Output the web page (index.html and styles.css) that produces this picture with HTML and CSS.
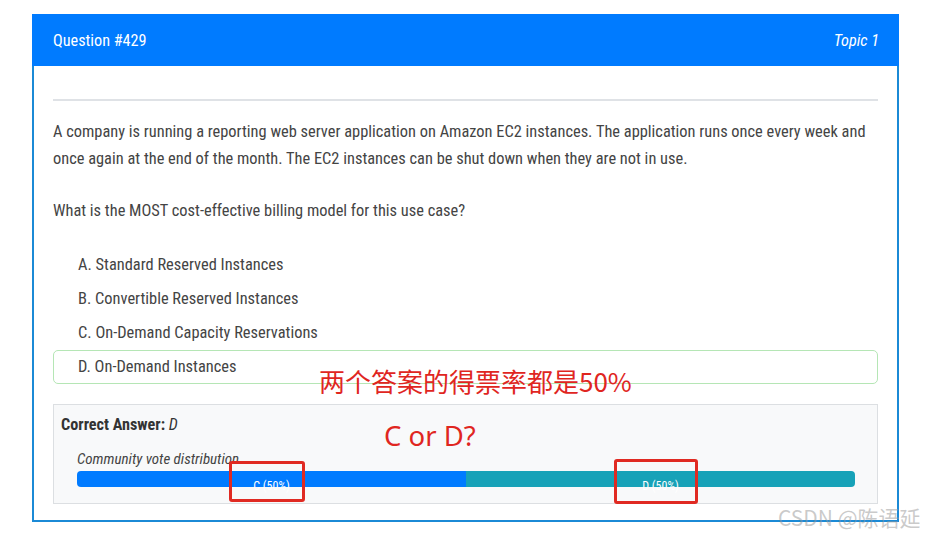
FILE: index.html
```html
<!DOCTYPE html>
<html>
<head>
<meta charset="utf-8">
<link rel="stylesheet" href="styles.css">
</head>
<body>
<div class="card">
  <div class="card-header">
    <span class="q-title">Question #429</span>
    <span class="q-topic">Topic 1</span>
  </div>
  <div class="card-body">
    <div class="rule"></div>
    <p class="q-text">A company is running a reporting web server application on Amazon EC2 instances. The application runs once every week and once again at the end of the month. The EC2 instances can be shut down when they are not in use.</p>
    <p class="q-text q-ask">What is the MOST cost-effective billing model for this use case?</p>
    <ul class="choices">
      <li class="choice">A. Standard Reserved Instances</li>
      <li class="choice">B. Convertible Reserved Instances</li>
      <li class="choice">C. On-Demand Capacity Reservations</li>
      <li class="choice correct">D. On-Demand Instances</li>
    </ul>
    <div class="answer">
      <div class="answer-line"><strong>Correct Answer:</strong> <em>D</em></div>
      <div class="vote-title">Community vote distribution</div>
      <div class="vote-bar">
        <div class="seg seg-c" style="width:50%"><span>C (50%)</span></div>
        <div class="seg seg-d" style="width:50%"><span>D (50%)</span></div>
      </div>
    </div>
  </div>
  <div class="note note-1">两个答案的得票率都是50%</div>
  <div class="note note-2">C or D?</div>
  <div class="mark mark-c"></div>
  <div class="mark mark-d"></div>
</div>
<div class="watermark">CSDN @陈语延</div>
</body>
</html>
```
FILE: styles.css
```css
html, body {
  margin: 0;
  padding: 0;
  background: #fff;
}
body {
  width: 926px;
  height: 534px;
  position: relative;
  overflow: hidden;
  font-family: "Roboto Condensed", "Liberation Sans Narrow", Roboto, sans-serif;
  color: #444;
}
.card {
  position: relative;
  margin: 14px 0 0 32px;
  width: 867px;
  box-sizing: border-box;
  border: 2px solid #1b8ad6;
  border-top: none;
  height: 508px;
}
.card-header {
  height: 52px;
  background: #007bff;
  margin: 0 -2px;
  padding: 0 20px 0 21px;
  display: flex;
  align-items: center;
  justify-content: space-between;
  color: #fff;
  font-size: 16.2px;
}
.q-topic {
  font-style: italic;
}
.card-body {
  padding: 33px 19px 0 19px;
}
.rule {
  height: 2px;
  background: #dfe2e6;
}
.q-text {
  margin: 17px 0 0;
  font-size: 16.4px;
  line-height: 27px;
}
.q-ask {
  margin-top: 25px;
}
.choices {
  list-style: none;
  margin: 24px 0 0;
  padding: 0;
}
.choice {
  font-size: 16.4px;
  line-height: 22px;
  padding: 5px 24px;
  border: 1px solid transparent;
  border-radius: 5px;
  color: #444;
}
.choice.correct {
  border-color: #b5e6b5;
}
.answer {
  margin-top: 20px;
  background: #f8f9fa;
  border: 1px solid #dcdfe2;
  height: 100px;
  box-sizing: border-box;
  padding: 10px 22px 0 7px;
}
.answer-line {
  font-size: 16.2px;
  line-height: 20px;
  color: #333;
}
.answer-line strong { font-weight: 700; }
.answer-line em { font-weight: 400; }
.vote-title {
  margin: 16px 0 0 16px;
  font-size: 15px;
  font-style: italic;
  line-height: 16px;
  color: #444;
}
.vote-bar {
  margin: 4px 0 0 16px;
  display: flex;
  height: 16px;
  border-radius: 4px;
}
.seg {
  text-align: center;
  color: #fff;
  font-size: 12px;
  line-height: 30px;
  height: 16px;
}
.seg span { display: inline-block; }
.seg-c {
  background: #007bff;
  border-radius: 4px 0 0 4px;
}
.seg-d {
  background: #17a2b8;
  border-radius: 0 4px 4px 0;
}
.note {
  position: absolute;
  color: #e0261f;
  font-family: "Noto Sans CJK SC", "Noto Sans", sans-serif;
  font-size: 26px;
  line-height: 28px;
  white-space: nowrap;
}
.note-1 { left: 285px; top: 353px; }
.note-2 { left: 350px; top: 408px; font-family: "Noto Sans", sans-serif; font-size: 27.5px; }
.mark {
  position: absolute;
  border: 3px solid #e02a22;
  border-radius: 3px;
  box-sizing: border-box;
}
.mark-c { left: 195px; top: 447px; width: 76px; height: 41px; }
.mark-d { left: 580px; top: 445px; width: 84px; height: 45px; }
.watermark {
  position: absolute;
  left: 778px;
  top: 503px;
  font-family: "Noto Sans CJK SC", sans-serif;
  font-size: 21px;
  line-height: 28px;
  color: rgba(150,150,150,0.5);
  white-space: nowrap;
}
```
